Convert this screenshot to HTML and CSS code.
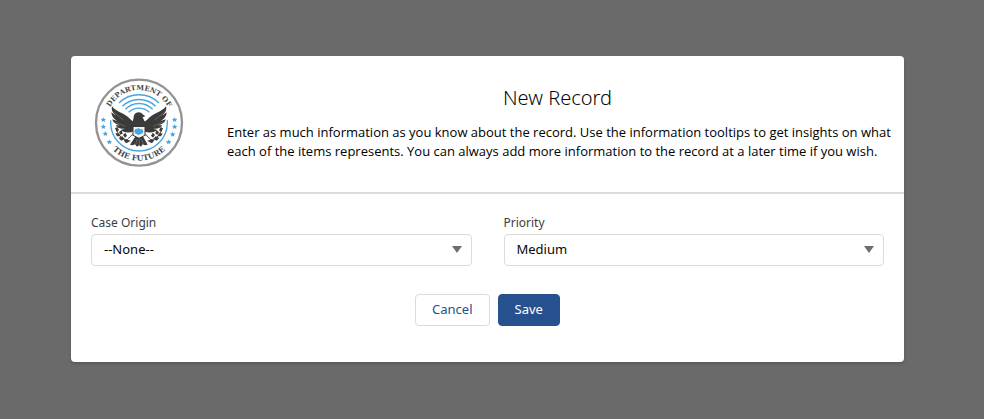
FILE: index.html
```html
<!DOCTYPE html>
<html lang="en">
<head>
<meta charset="utf-8">
<meta name="viewport" content="width=device-width, initial-scale=1">
<title>New Record</title>
<link rel="stylesheet" href="styles.css">
</head>
<body>
<main class="modal" role="dialog" aria-labelledby="modal-title">
  <header class="modal-header">
    <svg class="seal" viewBox="12 18 270 270" role="img" aria-label="Department of the Future">
      <defs>
        <path id="arc-top" d="M49 152a98 98 0 0 1 196 0v30"/>
        <path id="arc-bottom" d="M33 152a114 114 0 0 0 228 0"/>
        <path id="star" d="M0-8 2-3 8-2 4 2 5 7 0 4-5 7-4 2-8-2-2-3z"/>
        <g id="wing">
          <path d="M66 103C78 121 104 122 121 142L132 151 132 178C116 184 101 182 92 174L104 170C91 172 82 168 77 160L91 160C79 158 69 152 67 142L82 147C71 141 64 132 64 121L78 131C68 123 63 114 66 103z"/>
          <path class="feather" d="M70 120 100 144M76 150 105 163"/>
        </g>
        <g id="branch">
          <path class="stem" d="M79 171C85 192 99 204 121 207M130 187C121 191 117 198 112 203"/>
          <path d="M75 169 82 165 87 175 80 180zM87 180 95 174 98 185 91 188zM76 184 87 184 91 193 81 193zM86 198 97 193 104 201 94 206zM99 189 106 182 111 191 105 197zM101 205 111 201 118 209 108 214z"/>
        </g>
      </defs>
      <circle class="ring" cx="147" cy="152" r="129"/>
      <text class="seal-text"><textPath href="#arc-top" startOffset="154">DEPARTMENT OF</textPath></text>
      <text class="seal-text seal-text-wide"><textPath href="#arc-bottom" startOffset="50%">THE FUTURE</textPath></text>
      <g class="waves">
        <path d="M87 93A85 85 0 0 1 207 93"/>
        <path d="M97 103A71 71 0 0 1 197 103"/>
        <path d="M106 112A57 57 0 0 1 188 112"/>
        <path d="M116 121A44 44 0 0 1 178 121"/>
        <path d="M62 145v7a85 85 0 0 0 170 0v-7"/>
      </g>
      <g class="stars">
        <use href="#star" x="40" y="143"/>
        <use href="#star" x="40" y="164"/>
        <use href="#star" x="46" y="185"/>
        <use href="#star" x="58" y="210"/>
        <use href="#star" x="254" y="143"/>
        <use href="#star" x="254" y="164"/>
        <use href="#star" x="248" y="187"/>
        <use href="#star" x="236" y="210"/>
      </g>
      <g class="eagle">
        <use href="#wing"/>
        <use href="#wing" transform="translate(294 0) scale(-1 1)"/>
        <use href="#branch"/>
        <use href="#branch" transform="translate(294 0) scale(-1 1)"/>
        <path d="M128 151 132 130C136 119 153 118 158 127L166 133 158 136 165 151z"/>
        <path d="M135 195h25l13 23-8 2-7-3-5 7-6-4-6 4-6-7-7 3-8-2z"/>
        <path class="feather" d="M142 201 137 217M148 201v19M154 201 160 216"/>
        <path class="shield" d="M129 150h36v40q-11 5-18 9-7-4-18-9z"/>
        <path d="M129 150h36v15h-36z"/>
        <path class="cloud" d="M135 182q-5-10 5-11 6-5 11 1 9-2 9 7-2 8-9 7-6 6-10 0-5 1-6-4z"/>
      </g>
    </svg>
    <div class="intro">
      <h1 class="title" id="modal-title">New Record</h1>
      <p class="description">Enter as much information as you know about the record. Use the information tooltips to get insights on what each of the items represents. You can always add more information to the record at a later time if you wish.</p>
    </div>
  </header>
  <form class="form">
    <div class="fields">
      <div class="field">
        <label class="label" for="origin">Case Origin</label>
        <div class="select-wrap">
          <select class="select" id="origin"><option>--None--</option><option>Phone</option><option>Email</option><option>Web</option></select>
        </div>
      </div>
      <div class="field">
        <label class="label" for="priority">Priority</label>
        <div class="select-wrap">
          <select class="select" id="priority"><option>High</option><option selected>Medium</option><option>Low</option></select>
        </div>
      </div>
    </div>
    <div class="actions">
      <button class="button" type="button">Cancel</button>
      <button class="button button-brand" type="button">Save</button>
    </div>
  </form>
</main>
</body>
</html>
```
FILE: styles.css
```css
* {
  box-sizing: border-box;
}

body {
  margin: 0;
  padding: 56px 80px 56px 71px;
  background: #6a6a6a;
  color: #080707;
  font: 13px/19px "Noto Sans", sans-serif;
}

.modal {
  background: #fff;
  border-radius: 4px;
  box-shadow: 0 2px 3px rgba(0, 0, 0, 0.16);
}

.modal-header {
  display: flex;
  align-items: flex-start;
  gap: 43px;
  padding: 22px 4px 24px 23px;
  border-bottom: 2px solid #dddbda;
}

.seal {
  flex: none;
  width: 90px;
  height: 90px;
}

.ring {
  fill: #fff;
  stroke: #939393;
  stroke-width: 7;
}

.seal-text {
  fill: #4b4a49;
  font: bold 21px "DejaVu Serif", serif;
  text-anchor: middle;
}

.seal-text-wide {
  font-size: 23px;
}

.waves {
  fill: none;
  stroke: #48a5df;
  stroke-width: 4;
}

.stars,
.cloud {
  fill: #48a5df;
}

.eagle {
  fill: #3b3b3a;
}

.feather {
  fill: none;
  stroke: #b5b5b5;
  stroke-width: 1;
}

.stem {
  fill: none;
  stroke: #3b3b3a;
  stroke-width: 3;
}

.shield {
  fill: #f1f1f1;
  stroke: #3b3b3a;
  stroke-width: 3;
}

.intro {
  flex: 1;
  padding-top: 7px;
}

.title {
  margin: 0 0 13px;
  padding-right: 12px;
  font-size: 20px;
  line-height: 25px;
  font-weight: 300;
  text-align: center;
}

.description {
  margin: 0;
  color: #000;
  font-family: "Open Sans", sans-serif;
}

.form {
  padding: 20px 20px 36px;
}

.fields {
  display: grid;
  grid-template-columns: 1fr 1fr;
  gap: 32px;
}

.label {
  display: block;
  margin-bottom: 2px;
  color: #3e3e3c;
  font-size: 12px;
  line-height: 18px;
}

.select-wrap {
  position: relative;
}

.select-wrap::after {
  content: "";
  position: absolute;
  top: 12px;
  right: 10px;
  border: solid transparent;
  border-width: 7px 5px 0;
  border-top-color: #706e6b;
  pointer-events: none;
}

.select {
  display: block;
  width: 100%;
  height: 32px;
  padding: 0 12px 2px;
  appearance: none;
  border: 1px solid #dddbda;
  border-radius: 4px;
  background: #fff;
  color: #080707;
  font: inherit;
}

.actions {
  display: flex;
  justify-content: center;
  gap: 8px;
  margin-top: 28px;
}

.button {
  height: 32px;
  padding: 0 16px 2px;
  border: 1px solid #dddbda;
  border-radius: 4px;
  background: #fff;
  color: #27508f;
  font: inherit;
}

.button-brand {
  border-color: #27508f;
  background: #27508f;
  color: #fff;
}
```
